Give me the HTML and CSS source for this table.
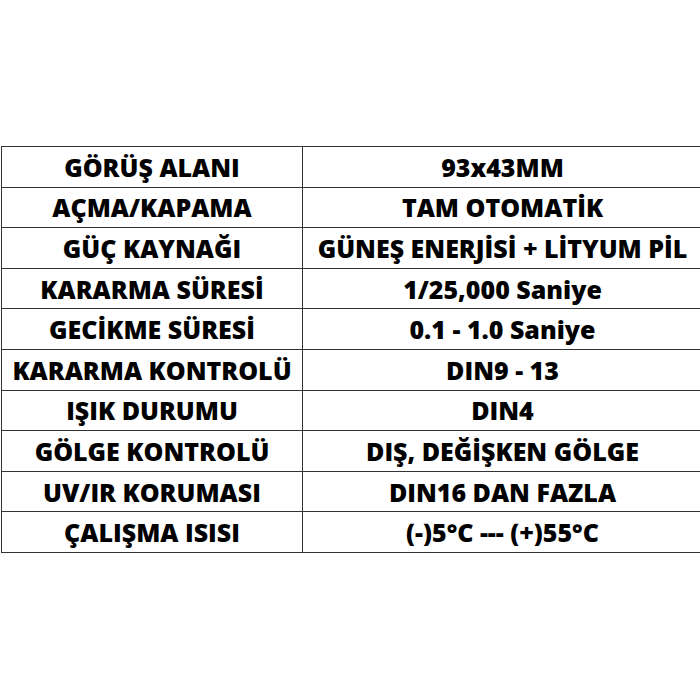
FILE: index.html
```html
<!DOCTYPE html>
<html lang="tr">
<head>
<meta charset="utf-8">
<link rel="stylesheet" href="styles.css">
</head>
<body>
<div class="page">
  <table class="spec">
    <tr><td class="k">GÖRÜŞ ALANI</td><td class="v">93x43MM</td></tr>
    <tr><td class="k">AÇMA/KAPAMA</td><td class="v">TAM OTOMATİK</td></tr>
    <tr><td class="k">GÜÇ KAYNAĞI</td><td class="v">GÜNEŞ ENERJİSİ + LİTYUM PİL</td></tr>
    <tr><td class="k">KARARMA SÜRESİ</td><td class="v">1/25,000 Saniye</td></tr>
    <tr><td class="k">GECİKME SÜRESİ</td><td class="v">0.1 - 1.0 Saniye</td></tr>
    <tr><td class="k">KARARMA KONTROLÜ</td><td class="v">DIN9 - 13</td></tr>
    <tr><td class="k">IŞIK DURUMU</td><td class="v">DIN4</td></tr>
    <tr><td class="k">GÖLGE KONTROLÜ</td><td class="v">DIŞ, DEĞİŞKEN GÖLGE</td></tr>
    <tr><td class="k">UV/IR KORUMASI</td><td class="v">DIN16 DAN FAZLA</td></tr>
    <tr><td class="k">ÇALIŞMA ISISI</td><td class="v">(-)5°C --- (+)55°C</td></tr>
  </table>
</div>
</body>
</html>
```
FILE: styles.css
```css
html, body {
  margin: 0;
  padding: 0;
  background: #fff;
}
.page {
  width: 700px;
  height: 700px;
  overflow: hidden;
  padding-top: 146px;
  padding-left: 1px;
  box-sizing: border-box;
}
.spec {
  border-collapse: collapse;
  width: 702px;
  table-layout: fixed;
  font-family: "Open Sans", Lato, sans-serif;
  font-weight: 800;
  font-size: 25px;
  color: #000;
}
.spec td {
  border: 1.5px solid #333;
  height: 39.6px;
  padding: 0;
  text-align: center;
  vertical-align: middle;
  white-space: nowrap;
  letter-spacing: 0;
}
.spec td.k {
  width: 300px;
}
.spec tr + tr td {
  border-top-color: #666;
}
```
